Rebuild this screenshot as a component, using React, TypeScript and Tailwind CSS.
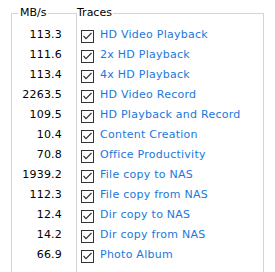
import React from "react";

const rows: [string, string][] = [
  ["113.3", "HD Video Playback"],
  ["111.6", "2x HD Playback"],
  ["113.4", "4x HD Playback"],
  ["2263.5", "HD Video Record"],
  ["109.5", "HD Playback and Record"],
  ["10.4", "Content Creation"],
  ["70.8", "Office Productivity"],
  ["1939.2", "File copy to NAS"],
  ["112.3", "File copy from NAS"],
  ["12.4", "Dir copy to NAS"],
  ["14.2", "Dir copy from NAS"],
  ["66.9", "Photo Album"],
];

function Check() {
  return (
    <span className="mt-[5px] flex h-[13px] w-[13px] shrink-0 items-center justify-center border border-[#333333] bg-white">
      <svg width="11" height="11" viewBox="0 0 11 11">
        <path d="M1.5 5 L4 7.6 L9.5 2" fill="none" stroke="#333333" strokeWidth="1.2" />
      </svg>
    </span>
  );
}

export default function App() {
  return (
    <div
      className="h-[272px] w-[275px] overflow-hidden bg-white text-[11px] text-black"
      style={{ fontFamily: '"DejaVu Sans", Verdana, sans-serif' }}
    >
      <div className="flex pl-[11px] pt-[13px]">
        <div className="relative h-[280px] w-[65px] border-l border-t border-[#d4d4d4] pr-[14px] pt-[11px]">
          <span className="absolute left-[6px] top-[-8px] bg-white px-[2px] leading-[14px]">MB/s</span>
          <div className="flex flex-col items-end">
            {rows.map(([v]) => (
              <div key={v} className="h-[20px] leading-[20px] tracking-[0.2px]">
                {v}
              </div>
            ))}
          </div>
        </div>
        <div className="relative h-[280px] w-[188px] border border-[#d4d4d4] pl-[4px] pt-[11px]">
          <span className="absolute left-0 top-[-8px] bg-white pr-[1px] leading-[14px]">Traces</span>
          <div className="flex flex-col">
            {rows.map(([v, t]) => (
              <div key={t} className="flex h-[20px] items-start gap-[6px]">
                <Check />
                <span className="leading-[20px] tracking-[0.25px] text-[#1a78dc]">{t}</span>
              </div>
            ))}
          </div>
        </div>
      </div>
    </div>
  );
}
